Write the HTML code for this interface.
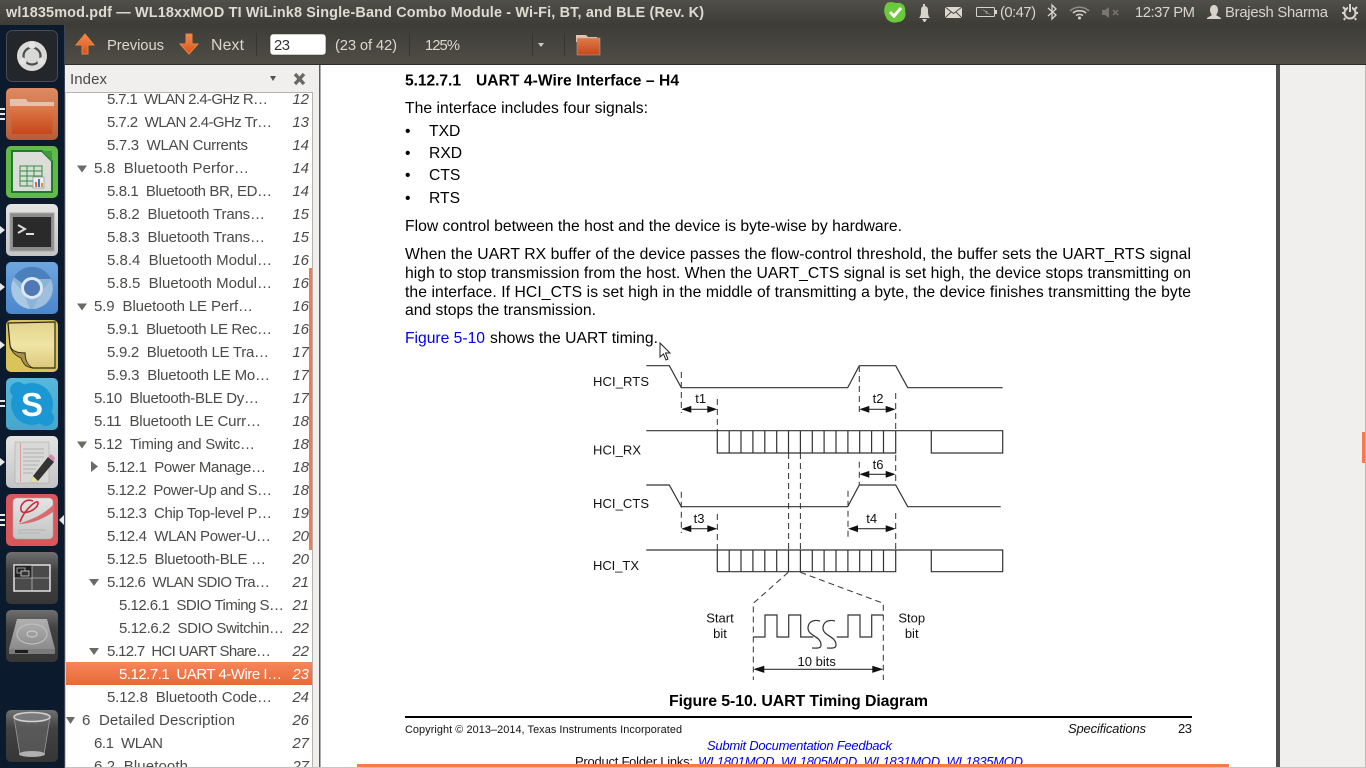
<!DOCTYPE html>
<html lang="en">
<head>
<meta charset="utf-8">
<title>wl1835mod.pdf</title>
<style>
html,body{margin:0;padding:0;width:1366px;height:768px;overflow:hidden;background:#fff}
svg{display:block;position:absolute;left:0;top:0}
text{white-space:pre;font-family:"Liberation Sans",sans-serif}
.ui{font-size:15px;fill:#4a4a48}
.pg{font-size:15px;font-style:italic;fill:#4a4a48;text-anchor:end}
.tb{font-size:14.8px;fill:#dcd8cf}
.p{font-size:15.7px;fill:#000}
.d{font-size:13px;fill:#111}
.dc{font-size:13px;fill:#111;text-anchor:middle}
.ln{fill:none;stroke:#333;stroke-width:1.2}
.da{fill:none;stroke:#333;stroke-width:1;stroke-dasharray:6 4}
.ar{fill:#111}
</style>
</head>
<body>
<svg width="1366" height="768" viewBox="0 0 1366 768" xmlns="http://www.w3.org/2000/svg">
<defs>
<linearGradient id="top" x1="0" y1="0" x2="0" y2="1"><stop offset="0" stop-color="#504f4a"/><stop offset="1" stop-color="#3d3c37"/></linearGradient>
<linearGradient id="tool" x1="0" y1="0" x2="0" y2="1"><stop offset="0" stop-color="#3d3c37"/><stop offset="1" stop-color="#504e46"/></linearGradient>
<linearGradient id="sel" x1="0" y1="0" x2="0" y2="1"><stop offset="0" stop-color="#f6865a"/><stop offset="1" stop-color="#e8693a"/></linearGradient>
<linearGradient id="or" x1="0" y1="0" x2="0" y2="1"><stop offset="0" stop-color="#f28a50"/><stop offset="1" stop-color="#d9531c"/></linearGradient>
<linearGradient id="dk" x1="0" y1="0" x2="0" y2="1"><stop offset="0" stop-color="#707070"/><stop offset=".35" stop-color="#424242"/><stop offset="1" stop-color="#363636"/></linearGradient>
<linearGradient id="lg" x1="0" y1="0" x2="0" y2="1"><stop offset="0" stop-color="#e4e4e4"/><stop offset="1" stop-color="#c4c4c4"/></linearGradient>
<linearGradient id="fo" x1="0" y1="0" x2="0" y2="1"><stop offset="0" stop-color="#e07a4a"/><stop offset="1" stop-color="#c5481a"/></linearGradient>
<linearGradient id="ft" x1="0" y1="0" x2="0" y2="1"><stop offset="0" stop-color="#df8a62"/><stop offset="1" stop-color="#b85c38"/></linearGradient>
<linearGradient id="bl" x1="0" y1="0" x2="0" y2="1"><stop offset="0" stop-color="#6ea6e0"/><stop offset="1" stop-color="#4a86cc"/></linearGradient>
<linearGradient id="sk" x1="0" y1="0" x2="0" y2="1"><stop offset="0" stop-color="#56b8dc"/><stop offset="1" stop-color="#46a6cc"/></linearGradient>
<linearGradient id="hd" x1="0" y1="0" x2="0" y2="1"><stop offset="0" stop-color="#b0b0b0"/><stop offset="1" stop-color="#8c8c8c"/></linearGradient>
<linearGradient id="ye" x1="0" y1="0" x2="0" y2="1"><stop offset="0" stop-color="#e2d48c"/><stop offset=".5" stop-color="#f0e4a4"/><stop offset="1" stop-color="#dcc878"/></linearGradient>
</defs>

<!-- page background -->
<rect x="320" y="65" width="960" height="703" fill="#fff"/>
<rect x="1276" y="65" width="4" height="703" fill="#4f4f4f"/>
<rect x="1280" y="65" width="86" height="703" fill="#f0efed"/>
<rect x="1365" y="65" width="1" height="703" fill="#b8b6b2"/>
<rect x="1362" y="432" width="3" height="31" fill="#f47c4a"/>

<!-- top panel -->
<rect x="0" y="0" width="1366" height="25" fill="url(#top)"/>
<text x="6" y="17" textLength="698" style="font-size:14.4px;font-weight:bold;fill:#dfdbd2">wl1835mod.pdf — WL18xxMOD TI WiLink8 Single-Band Combo Module - Wi-Fi, BT, and BLE (Rev. K)</text>

<!-- toolbar -->
<rect x="65" y="25" width="1301" height="40" fill="url(#tool)"/>
<rect x="65" y="64" width="1301" height="1" fill="#2e2d29"/>
<path d="M85 34 L94 45 L88 45 L88 54 L82 54 L82 45 L76 45Z" fill="url(#or)" stroke="#e8843c" stroke-width="1"/>
<text class="tb" x="107" y="50" textLength="57">Previous</text>
<path d="M189 54 L198 44 L192 44 L192 34 L186 34 L186 44 L180 44Z" fill="url(#or)" stroke="#e8843c" stroke-width="1"/>
<text x="211" y="50" textLength="33" style="font-size:15.8px;fill:#dcd8cf">Next</text>
<rect x="256" y="33" width="1" height="23" fill="#36352f"/>
<rect x="270" y="34" width="56" height="21" rx="3" fill="#fff" stroke="#35342f" stroke-width=".6"/>
<text x="274" y="50" textLength="16" style="font-size:14.8px;fill:#333">23</text>
<text class="tb" x="335" y="50" textLength="62">(23 of 42)</text>
<rect x="409" y="33" width="1" height="23" fill="#36352f"/>
<text class="tb" x="425" y="50" textLength="35">125%</text>
<rect x="532" y="33" width="1" height="23" fill="#36352f"/>
<path d="M538 43 L544 43 L541 47Z" fill="#cfcbc2"/>
<rect x="564" y="33" width="1" height="23" fill="#36352f"/>
<path d="M576 35 L586 35 L588 37 L597 37 L597 42 L576 42Z" fill="#e6c6b0"/>
<rect x="577" y="38" width="23" height="17" fill="url(#fo)" stroke="#b8b0a6" stroke-width=".5"/>

<!-- indicators -->
<path d="M887 3 C891 1 895 3 897 3 C903 2 906 7 905 11 C907 17 903 22 898 22 C893 24 887 21 886 17 C883 12 884 6 887 3Z" fill="#6cc83c"/>
<path d="M890 12 L894 16 L901 8" fill="none" stroke="#fff" stroke-width="3"/>
<path d="M919 18 C921 16 921 13 921 10 C921 7 923 6 924 6 C926 6 928 7 928 10 C928 13 928 16 930 18Z" fill="#d8d4cb"/>
<rect x="923" y="4" width="2" height="2" fill="#d8d4cb"/><path d="M922 19 L927 19 L925 22 L924 22Z" fill="#d8d4cb"/>
<rect x="945" y="7" width="17" height="11" fill="#dcd8d0"/>
<path d="M945 7 L953.5 13.5 L962 7 M945 18 L951 12 M962 18 L956 12" fill="none" stroke="#4a4943" stroke-width="1"/>
<rect x="976.5" y="7.5" width="18" height="9" rx="1" fill="none" stroke="#d8d4cb"/>
<rect x="995" y="10" width="2" height="4" fill="#d8d4cb"/>
<path d="M981 9 L988 12 L986 12.5 L992 15 L985 13 L987 12.5Z" fill="#d8d4cb"/>
<text x="1000" y="17" textLength="36" style="font-size:14.8px;fill:#d8d4cb">(0:47)</text>
<path d="M1048 8 L1056 15 L1052 19 L1052 5 L1056 9 L1048 16" fill="none" stroke="#d8d4cb" stroke-width="1.3"/>
<path d="M1070 11 C1075 6 1084 6 1089 11" fill="none" stroke="#8e8c84" stroke-width="1.6"/>
<path d="M1073 13 C1076 10 1083 10 1086 13" fill="none" stroke="#d8d4cb" stroke-width="1.6"/>
<path d="M1076 15.5 C1078 14 1081 14 1083 15.5" fill="none" stroke="#d8d4cb" stroke-width="1.6"/>
<circle cx="1079.5" cy="18" r="1.5" fill="#d8d4cb"/>
<path d="M1102 10 L1105 10 L1109 7 L1109 18 L1105 15 L1102 15Z" fill="#77756e"/>
<path d="M1113 10 L1118 15 M1118 10 L1113 15" stroke="#77756e" stroke-width="1.5"/>
<text x="1135" y="17" textLength="60" style="font-size:14.8px;fill:#d8d4cb">12:37 PM</text>
<path d="M1214 5 C1217 5 1218 8 1218 10 C1218 12 1217 14 1216 15 L1221 18 L1221 19 L1207 19 L1207 18 L1212 15 C1211 14 1210 12 1210 10 C1210 8 1211 5 1214 5Z" fill="#d8d4cb"/>
<text x="1225" y="17" textLength="103" style="font-size:14.8px;fill:#d8d4cb">Brajesh Sharma</text>
<circle cx="1350" cy="13" r="5.5" fill="none" stroke="#d8d4cb" stroke-width="2"/>
<path d="M1343 7 L1345 9 M1357 7 L1355 9 M1342 13 L1344 13 M1356 13 L1358 13 M1345 18 L1344 20 M1355 18 L1356 20" stroke="#d8d4cb" stroke-width="2"/>
<rect x="1348" y="4" width="4" height="5" fill="#46453f"/><rect x="1349" y="4" width="2" height="8" fill="#d8d4cb"/>

<!-- sidebar -->
<rect x="65" y="65" width="255" height="703" fill="#f0efed"/>
<rect x="66" y="93" width="246" height="675" fill="#fff"/>
<rect x="66" y="92" width="247" height="1" fill="#b5b3af"/>
<rect x="65" y="92" width="1" height="676" fill="#cfcdc9"/>
<rect x="312" y="92" width="1" height="676" fill="#b5b3af"/>
<rect x="319" y="65" width="1.5" height="703" fill="#5c5b58"/>
<text x="70" y="84" textLength="37" style="font-size:15px;fill:#4a4a48">Index</text>
<path d="M270 76 L276 76 L273 81Z" fill="#55534f"/>
<path d="M295 74 L304 84 M304 74 L295 84" stroke="#6a6965" stroke-width="3.4"/>

<rect x="66" y="662" width="246" height="23" fill="url(#sel)"/>

<g>
<text class="ui" x="107" y="104" textLength="161">5.7.1  WLAN 2.4-GHz R…</text><text class="pg" x="309" y="104">12</text>
<text class="ui" x="107" y="127" textLength="165">5.7.2  WLAN 2.4-GHz Tr…</text><text class="pg" x="309" y="127">13</text>
<text class="ui" x="107" y="150" textLength="141">5.7.3  WLAN Currents</text><text class="pg" x="309" y="150">14</text>
<text class="ui" x="94" y="173" textLength="155">5.8  Bluetooth Perfor…</text><text class="pg" x="309" y="173">14</text>
<text class="ui" x="107" y="196" textLength="165">5.8.1  Bluetooth BR, ED…</text><text class="pg" x="309" y="196">14</text>
<text class="ui" x="107" y="219" textLength="158">5.8.2  Bluetooth Trans…</text><text class="pg" x="309" y="219">15</text>
<text class="ui" x="107" y="242" textLength="158">5.8.3  Bluetooth Trans…</text><text class="pg" x="309" y="242">15</text>
<text class="ui" x="107" y="265" textLength="165">5.8.4  Bluetooth Modul…</text><text class="pg" x="309" y="265">16</text>
<text class="ui" x="107" y="288" textLength="165">5.8.5  Bluetooth Modul…</text><text class="pg" x="309" y="288">16</text>
<text class="ui" x="94" y="311" textLength="159">5.9  Bluetooth LE Perf…</text><text class="pg" x="309" y="311">16</text>
<text class="ui" x="107" y="334" textLength="165">5.9.1  Bluetooth LE Rec…</text><text class="pg" x="309" y="334">16</text>
<text class="ui" x="107" y="357" textLength="162">5.9.2  Bluetooth LE Tra…</text><text class="pg" x="309" y="357">17</text>
<text class="ui" x="107" y="380" textLength="163">5.9.3  Bluetooth LE Mo…</text><text class="pg" x="309" y="380">17</text>
<text class="ui" x="94" y="403" textLength="165">5.10  Bluetooth-BLE Dy…</text><text class="pg" x="309" y="403">17</text>
<text class="ui" x="94" y="426" textLength="167">5.11  Bluetooth LE Curr…</text><text class="pg" x="309" y="426">18</text>
<text class="ui" x="94" y="449" textLength="161">5.12  Timing and Switc…</text><text class="pg" x="309" y="449">18</text>
<text class="ui" x="107" y="472" textLength="159">5.12.1  Power Manage…</text><text class="pg" x="309" y="472">18</text>
<text class="ui" x="107" y="495" textLength="165">5.12.2  Power-Up and S…</text><text class="pg" x="309" y="495">18</text>
<text class="ui" x="107" y="518" textLength="165">5.12.3  Chip Top-level P…</text><text class="pg" x="309" y="518">19</text>
<text class="ui" x="107" y="541" textLength="164">5.12.4  WLAN Power-U…</text><text class="pg" x="309" y="541">20</text>
<text class="ui" x="107" y="564" textLength="159">5.12.5  Bluetooth-BLE …</text><text class="pg" x="309" y="564">20</text>
<text class="ui" x="107" y="587" textLength="163">5.12.6  WLAN SDIO Tra…</text><text class="pg" x="309" y="587">21</text>
<text class="ui" x="119" y="610" textLength="165">5.12.6.1  SDIO Timing S…</text><text class="pg" x="309" y="610">21</text>
<text class="ui" x="119" y="633" textLength="165">5.12.6.2  SDIO Switchin…</text><text class="pg" x="309" y="633">22</text>
<text class="ui" x="107" y="656" textLength="164">5.12.7  HCI UART Share…</text><text class="pg" x="309" y="656">22</text>
<text class="ui" x="119" y="679" textLength="163" style="fill:#fff">5.12.7.1  UART 4-Wire I…</text><text class="pg" x="309" y="679" style="fill:#fff">23</text>
<text class="ui" x="107" y="702" textLength="165">5.12.8  Bluetooth Code…</text><text class="pg" x="309" y="702">24</text>
<text class="ui" x="82" y="725" textLength="153">6  Detailed Description</text><text class="pg" x="309" y="725">26</text>
<text class="ui" x="94" y="748" textLength="69">6.1  WLAN</text><text class="pg" x="309" y="748">27</text>
<text class="ui" x="94" y="771" textLength="94">6.2  Bluetooth</text><text class="pg" x="309" y="771">27</text>
</g>
<rect x="66" y="767" width="254" height="1" fill="#c4c2be"/>
<g fill="#6b6a67">
<path d="M77 165.5 L87 165.5 L82 172.5Z"/>
<path d="M77 303.5 L87 303.5 L82 310.5Z"/>
<path d="M77 441.5 L87 441.5 L82 448.5Z"/>
<path d="M91 461 L98 466.5 L91 472Z"/>
<path d="M89 579 L99 579 L94 586Z"/>
<path d="M89 648 L99 648 L94 655Z"/>
<path d="M66 717 L75 717 L70.5 724Z"/>
</g>
<rect x="309" y="268" width="3" height="282" fill="#f47c4a"/>

<!-- launcher -->
<rect x="0" y="25" width="65" height="743" fill="#0c1a2e"/>
<rect x="64" y="25" width="1" height="743" fill="#3a4656"/>

<!-- BFB -->
<rect x="6.5" y="30.5" width="51" height="51" rx="6" fill="#23262b" stroke="#4a4d52"/>
<circle cx="32" cy="56" r="15" fill="#d9d9d6"/>
<circle cx="32" cy="56" r="8.5" fill="none" stroke="#4a4c50" stroke-width="2.2"/>
<circle cx="32" cy="45" r="3.6" fill="#e4e4e2" stroke="#d9d9d6"/>
<circle cx="22.5" cy="61.5" r="3.6" fill="#e4e4e2" stroke="#d9d9d6"/>
<circle cx="41.5" cy="61.5" r="3.6" fill="#e4e4e2" stroke="#d9d9d6"/>

<!-- Files -->
<rect x="6" y="88" width="52" height="52" rx="5" fill="url(#ft)"/>
<path d="M10 99 L26 99 L28 102 L54 102 L54 106 L10 106Z" fill="#e6c2ac"/>
<path d="M10 106 L54 106 L52 134 L12 134Z" fill="url(#fo)"/>

<!-- Calc -->
<rect x="6" y="146" width="52" height="52" rx="5" fill="#62b94a"/>
<path d="M12 151 L42 151 L52 161 L52 192 L12 192Z" fill="#dcdcd8" stroke="#1f7a2e" stroke-width="2"/>
<path d="M42 151 L52 151 L52 161Z" fill="#3e9a3c"/>
<g fill="none" stroke="#2d9440" stroke-width="1"><rect x="20" y="166" width="22" height="20"/><path d="M20 171 H42 M20 176 H42 M20 181 H42 M27 166 V186 M34 166 V186"/></g>
<rect x="33" y="177" width="11" height="11" fill="#eee" stroke="#888" stroke-width=".6"/>
<rect x="35" y="182" width="2" height="5" fill="#e46c2c"/><rect x="38" y="179" width="2" height="8" fill="#3a78c8"/><rect x="41" y="183" width="2" height="4" fill="#cc9c28"/>

<!-- Terminal -->
<rect x="6" y="204" width="52" height="52" rx="5" fill="url(#lg)"/>
<rect x="10" y="213" width="44" height="38" fill="#8c8c8a" stroke="#a8a8a6"/>
<rect x="13" y="217" width="38" height="30" fill="#2a2a2a"/>
<path d="M18 225 L25 229 L18 233" fill="none" stroke="#ddd" stroke-width="2"/>
<rect x="26" y="233" width="8" height="2" fill="#ddd"/>

<!-- Chromium -->
<rect x="6" y="262" width="52" height="52" rx="5" fill="url(#bl)"/>
<circle cx="32" cy="288" r="21" fill="#8cb4d8"/>
<path d="M14 277 A21 21 0 0 1 51 279 L32 279 A10 10 0 0 0 23 284Z" fill="#4a80bc"/>
<path d="M13 280 L24 294 L30 309 A21 21 0 0 1 13 280Z" fill="#a9c8e2"/>
<path d="M51 280 A21 21 0 0 1 33 309 L41 293Z" fill="#9ec0de"/>
<circle cx="32" cy="288" r="9.5" fill="#5078b4" stroke="#dbe8f2" stroke-width="3"/>

<!-- Notes -->
<rect x="6" y="320" width="52" height="52" rx="5" fill="#d8c458"/>
<path d="M8 323 L55 322 L55 368 L33 368 C28 367 25 362 25 353 C18 353 11 352 10 345Z" fill="url(#ye)" stroke="#2d2a1c" stroke-width="1.2"/>
<path d="M10 347 C13 352 19 353 25 353 C25 360 28 366 33 368 C27 367 24 366 21 358 C16 356 12 352 10 347Z" fill="#a8924a" stroke="#2d2a1c" stroke-width=".8"/>

<!-- Skype -->
<rect x="6" y="378" width="52" height="52" rx="5" fill="url(#sk)"/>
<circle cx="32" cy="404" r="21" fill="#1b98d4"/>
<circle cx="18" cy="390" r="8" fill="#1b98d4"/><circle cx="46" cy="418" r="8" fill="#1b98d4"/>
<text x="32" y="416" text-anchor="middle" style="font-size:33px;font-weight:bold;fill:#fff">S</text>

<!-- Gedit -->
<rect x="6" y="436" width="52" height="52" rx="5" fill="url(#lg)"/>
<rect x="15" y="442" width="34" height="41" fill="#d8d8d6" stroke="#aaa" stroke-width=".6"/>
<path d="M23 449 H44 M23 453 H44 M23 457 H44 M23 461 H40 M23 465 H38 M23 469 H36 M23 473 H33" stroke="#a4a4a4" stroke-width=".7"/>
<rect x="20" y="443" width=".8" height="39" fill="#d89090"/>
<path d="M33 476 L48 457 L54 462 L38 481 L30 483Z" fill="#333"/>
<path d="M48 457 L51 454 L55 458 L54 462Z" fill="#d98ab0"/>
<path d="M33 476 L38 481 L30 483Z" fill="#e8e0a0"/>

<!-- Sumatra -->
<rect x="6" y="494" width="52" height="52" rx="5" fill="#d9565a"/>
<rect x="13" y="498" width="40" height="41" rx="4" fill="url(#lg)" stroke="#a8a8a8" stroke-width=".6"/>
<path d="M20 522 C24 510 38 498 38 503 C38 510 22 516 21 510 C20 504 26 498 33 501" fill="none" stroke="#cc2c36" stroke-width="1.6"/>
<path d="M18 524 C30 520 42 516 53 505 L53 512 C42 520 30 524 18 524Z" fill="#d66c70"/>
<path d="M18 530 H46 M18 533 H40" stroke="#aaa" stroke-width=".8"/>

<!-- Workspaces -->
<rect x="6" y="552" width="52" height="52" rx="5" fill="url(#dk)"/>
<rect x="14" y="565" width="36" height="26" fill="#4a4a4a" stroke="#e2e2e2" stroke-width="1.5"/>
<rect x="14.7" y="565.7" width="17.3" height="12.3" fill="#222"/>
<path d="M32 565 V591 M14 578 H50" stroke="#bbb" stroke-width=".8"/>
<rect x="17" y="568" width="8" height="5" fill="none" stroke="#bbb" stroke-width=".8"/>
<rect x="21" y="571" width="8" height="5" fill="#333" stroke="#ddd" stroke-width=".8"/>

<!-- HDD -->
<rect x="6" y="610" width="52" height="52" rx="5" fill="url(#dk)"/>
<path d="M17 619 L47 619 L55 649 L9 649Z" fill="url(#hd)"/>
<path d="M9 649 L55 649 L55 654 L9 654Z" fill="#7a7a7a"/>
<rect x="15" y="650" width="13" height="3" fill="#1c1c1c"/>
<ellipse cx="32" cy="634" rx="15" ry="10" fill="none" stroke="#c4c4c4" stroke-width="1"/>
<ellipse cx="32" cy="634" rx="5" ry="3" fill="none" stroke="#d0d0d0" stroke-width="1"/>

<!-- Trash -->
<rect x="6" y="710" width="52" height="52" rx="5" fill="url(#dk)"/>
<path d="M14 717 L50 717 L44 755 L20 755Z" fill="#6c6c6c" fill-opacity=".55" stroke="#999" stroke-width=".8"/>
<ellipse cx="32" cy="717" rx="18" ry="4.5" fill="#7a7a7a" stroke="#d0d0d0" stroke-width="1.6"/>
<ellipse cx="32" cy="754" rx="13" ry="3" fill="#b0b0b0"/>

<!-- pips -->
<g fill="#e8e8e8">
<rect x="0" y="108" width="5" height="2"/><rect x="0" y="113" width="5" height="2"/><rect x="0" y="118" width="5" height="2"/>
<path d="M0 226 L5 230 L0 234Z"/>
<path d="M0 283 L5 287 L0 291Z"/>
<path d="M0 341 L5 345 L0 349Z"/>
<rect x="0" y="400" width="5" height="2"/><rect x="0" y="405" width="5" height="2"/>
<path d="M0 458 L5 462 L0 466Z"/>
<rect x="0" y="514" width="5" height="2"/><rect x="0" y="519" width="5" height="2"/><rect x="0" y="524" width="5" height="2"/>
<path d="M64 515 L59 520 L64 525Z"/>
</g>

<!-- PDF text -->
<text x="405" y="85.5" textLength="56" style="font-size:15.6px;font-weight:bold;fill:#000">5.12.7.1</text>
<text x="476" y="85.5" textLength="203" style="font-size:15.6px;font-weight:bold;fill:#000">UART 4-Wire Interface – H4</text>
<text class="p" x="405" y="113" textLength="243">The interface includes four signals:</text>
<text class="p" x="405" y="136">•</text><text class="p" x="429" y="136">TXD</text>
<text class="p" x="405" y="158">•</text><text class="p" x="429" y="158">RXD</text>
<text class="p" x="405" y="180">•</text><text class="p" x="429" y="180">CTS</text>
<text class="p" x="405" y="203">•</text><text class="p" x="429" y="203">RTS</text>
<text class="p" x="405" y="231" textLength="497">Flow control between the host and the device is byte-wise by hardware.</text>
<text class="p" x="405" y="259" textLength="786">When the UART RX buffer of the device passes the flow-control threshold, the buffer sets the UART_RTS signal</text>
<text class="p" x="405" y="278" textLength="786">high to stop transmission from the host. When the UART_CTS signal is set high, the device stops transmitting on</text>
<text class="p" x="405" y="297" textLength="786">the interface. If HCI_CTS is set high in the middle of transmitting a byte, the device finishes transmitting the byte</text>
<text class="p" x="405" y="315" textLength="191">and stops the transmission.</text>
<text class="p" x="405" y="343" textLength="80" style="fill:#0000ee">Figure 5-10</text>
<text class="p" x="490" y="343" textLength="168">shows the UART timing.</text>

<!-- cursor -->
<path d="M660 343 L660 357 L663.5 354 L666 360 L668 359 L665.5 353 L670 353Z" fill="#fff" stroke="#222" stroke-width="1"/>

<!-- diagram -->
<g>
<text class="d" x="593" y="386" textLength="56">HCI_RTS</text>
<text class="d" x="593" y="454.5" textLength="48">HCI_RX</text>
<text class="d" x="593" y="508" textLength="56">HCI_CTS</text>
<text class="d" x="593" y="570" textLength="46">HCI_TX</text>

<path class="ln" d="M646.3 365.7 H669.3 L681.3 387.7 H847.7 L859.3 365.7 H895.7 L907.7 387.7 H1002.7"/>
<path class="ln" d="M646.3 485 H669.3 L681.3 506.7 H847.7 L859.3 485 H895.7 L907.7 506.7 H1000.7"/>

<path class="ln" d="M646.3 430.7 H1002.7 V453 H931.3 V430.7 M717.3 430.7 V453 H895.7 V430.7"/>
<path class="ln" d="M729.2 430.7V453M741 430.7V453M752.9 430.7V453M764.8 430.7V453M776.7 430.7V453M788.5 430.7V453M800.4 430.7V453M812.3 430.7V453M824.1 430.7V453M836 430.7V453M847.9 430.7V453M859.7 430.7V453M871.6 430.7V453M883.5 430.7V453"/>

<path class="ln" d="M646.3 550 H1002.7 V571.7 H931.3 V550 M717.3 550 V571.7 H895.7 V550"/>
<path class="ln" d="M729.2 550V571.7M741 550V571.7M752.9 550V571.7M764.8 550V571.7M776.7 550V571.7M788.5 550V571.7M800.4 550V571.7M812.3 550V571.7M824.1 550V571.7M836 550V571.7M847.9 550V571.7M859.7 550V571.7M871.6 550V571.7M883.5 550V571.7"/>

<path class="da" d="M681.3 372V413 M717.3 399V431 M859.3 366V416 M895.7 393V431 M788.6 453V550 M800.4 453V550 M859.3 461.7V485 M895.7 455V483 M848 490.7V538 M681.3 491.7V533 M717.3 514V550 M895.7 513V550"/>
<path class="da" d="M788.3 572.3 L753.3 603.3 V680 M800.3 572.3 L883.3 603.3 V680"/>

<path class="ln" d="M686 409.3H712 M864 409.3H891 M864 474.3H891 M686 528.7H712 M853 528.7H891 M758 669.3H878"/>
<path class="ar" d="M681.3 409.3l10-3.4v6.8z M717.3 409.3l-10-3.4v6.8z M859.3 409.3l10-3.4v6.8z M895.7 409.3l-10-3.4v6.8z M859.3 474.3l10-3.4v6.8z M895.7 474.3l-10-3.4v6.8z M681.3 528.7l10-3.4v6.8z M717.3 528.7l-10-3.4v6.8z M848 528.7l10-3.4v6.8z M895.7 528.7l-10-3.4v6.8z M753.3 669.3l11-3.6v7.2z M883.3 669.3l-11-3.6v7.2z"/>

<text class="dc" x="700.7" y="403">t1</text>
<text class="dc" x="878" y="403">t2</text>
<text class="dc" x="878" y="469">t6</text>
<text class="dc" x="699" y="523">t3</text>
<text class="dc" x="871.7" y="523">t4</text>

<path class="ln" d="M753.3 637 H765 V615 H777 V637 H788.7 V615 H800.7 V637 H813.3"/>
<path class="ln" d="M836.7 637 H848 V615 H860 V637 H871.7 V615 H883.3"/>
<path class="ln" d="M820 621 C812 619 808 623 808 628 C808 636 821 636 821 645 C821 649 816 648 812 648"/>
<path class="ln" d="M835 621 C827 619 823 623 823 628 C823 636 836 636 836 645 C836 649 831 648 827 648"/>

<text class="dc" x="720" y="622.5">Start</text>
<text class="dc" x="720" y="638">bit</text>
<text class="dc" x="911.7" y="622.5">Stop</text>
<text class="dc" x="911.7" y="638">bit</text>
<text class="dc" x="816.7" y="666">10 bits</text>
</g>

<text x="669" y="705.8" textLength="259" style="font-size:15.9px;font-weight:bold;fill:#000">Figure 5-10. UART Timing Diagram</text>
<rect x="405" y="716" width="787" height="2" fill="#000"/>
<text x="405" y="733" textLength="277" style="font-size:10.9px;fill:#111">Copyright © 2013–2014, Texas Instruments Incorporated</text>
<text x="1068" y="733" textLength="78" style="font-size:13px;font-style:italic;fill:#111">Specifications</text>
<text x="1178" y="733" textLength="14" style="font-size:13px;fill:#111">23</text>
<text x="707" y="750" textLength="185" style="font-size:13px;font-style:italic;fill:#0000ee">Submit Documentation Feedback</text>
<text x="575" y="766" textLength="118" style="font-size:13px;fill:#111">Product Folder Links:</text>
<text x="698" y="766" textLength="325" style="font-size:13px;font-style:italic;fill:#0000ee">WL1801MOD, WL1805MOD, WL1831MOD, WL1835MOD</text>
<rect x="357" y="764" width="872" height="3" fill="#f47c4a"/>
<rect x="320" y="767" width="1046" height="1" fill="#c9c7c3"/>
</svg>
</body>
</html>
